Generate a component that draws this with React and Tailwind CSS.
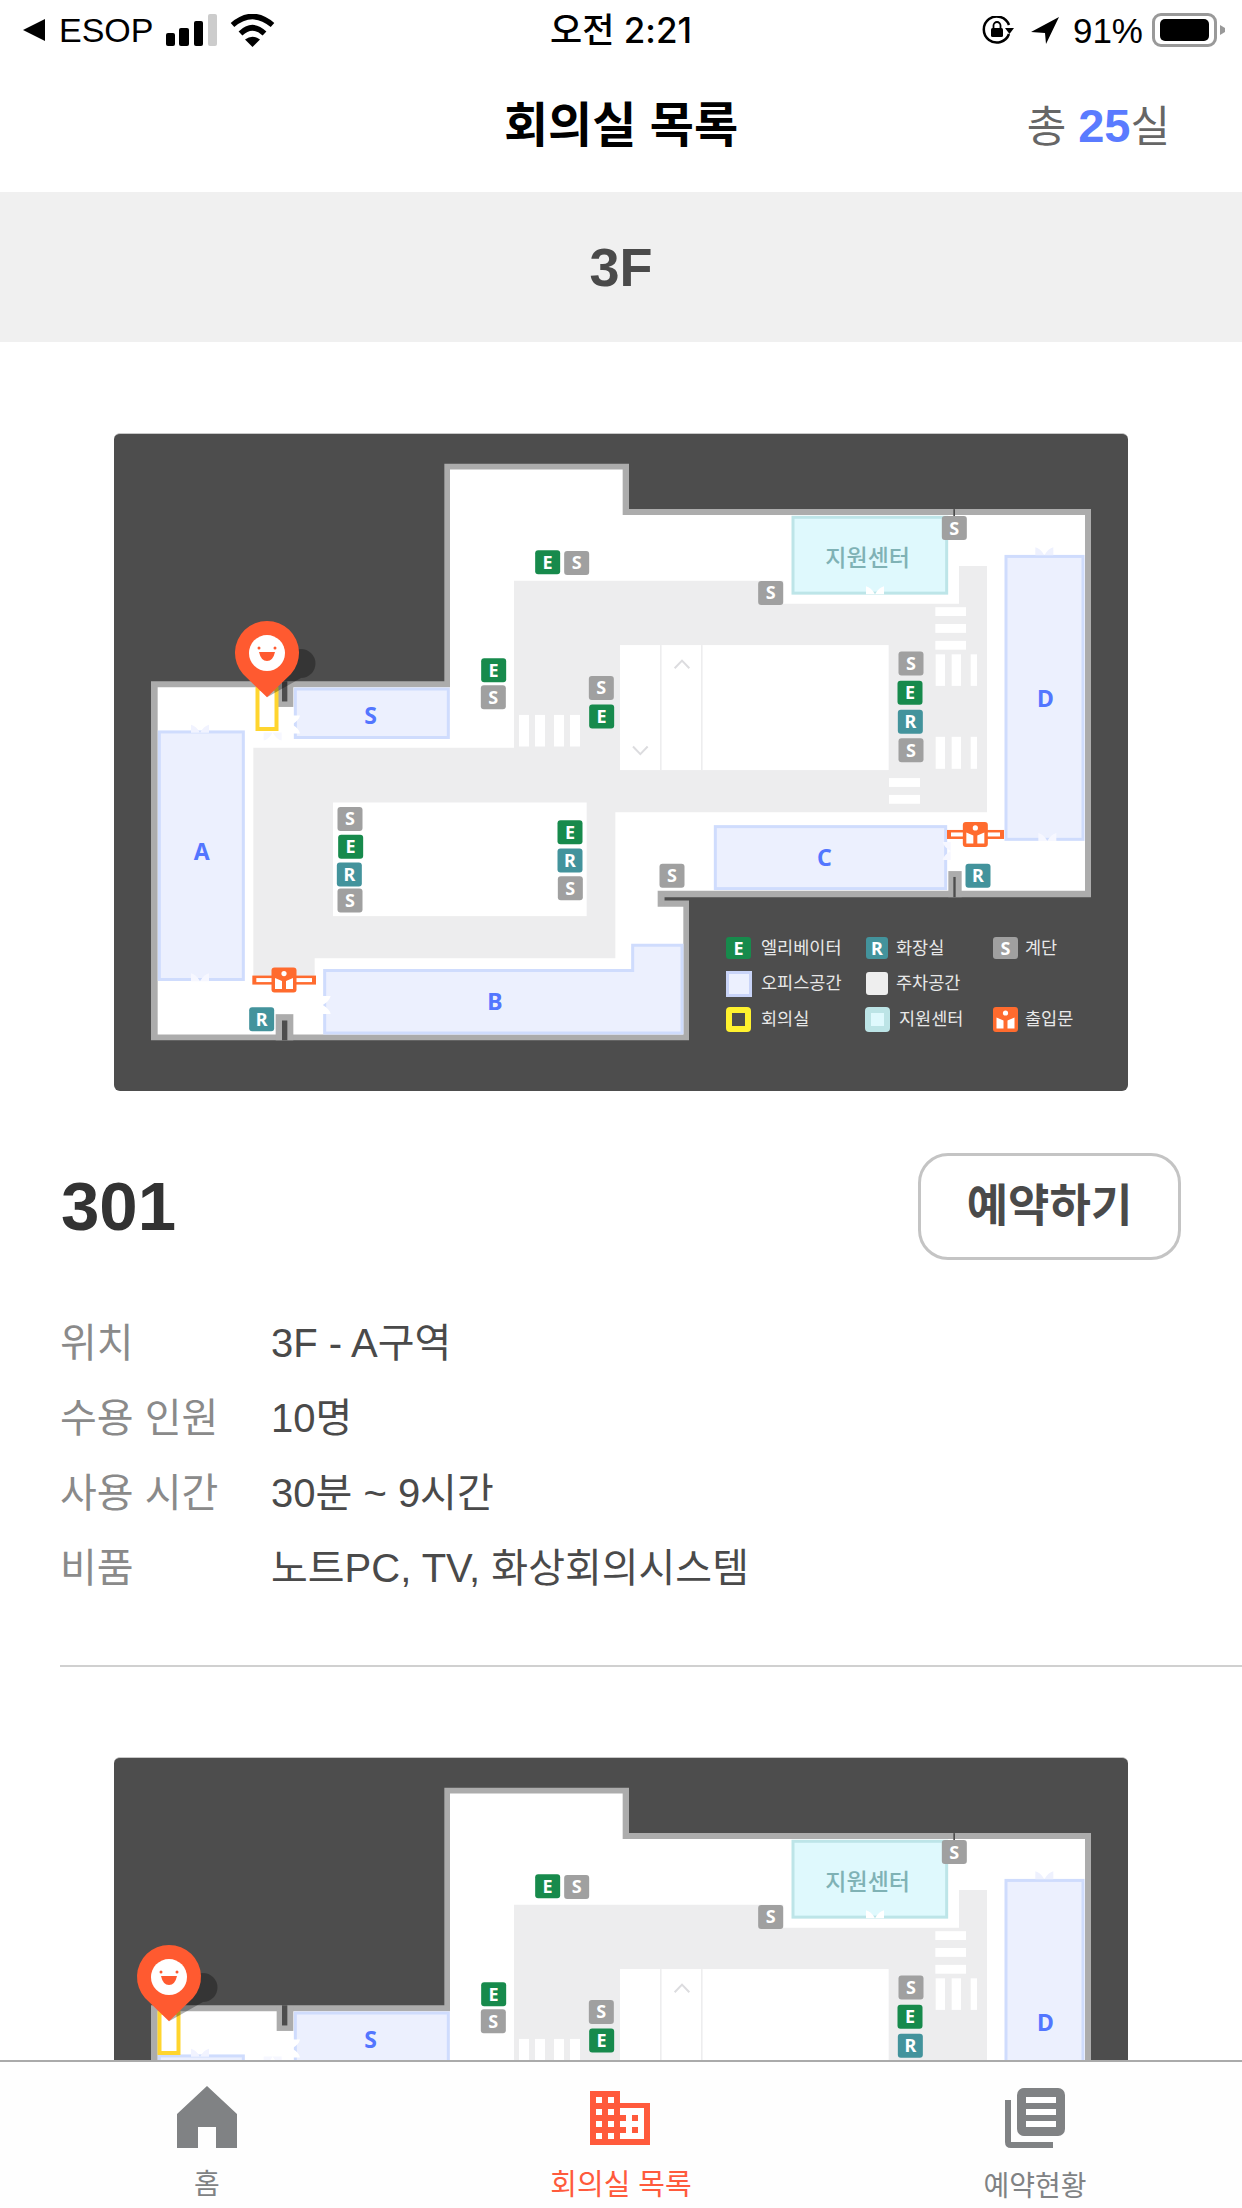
import React from 'react';

// reference crops were read in crop units, so the map numbers stay in those units
const lx = (u) => u / 3 - 4;
const rx = (u) => u / 3 + 506;
const vy = (v) => v / 2.376 - 3;
const pts = (list) => list.map(([x, y]) => `${x},${y}`).join(' ');

const TILE = { E: '#178a4c', S: '#a0a0a0', R: '#43939c' };
const MAP_FONT = "'Noto Sans','Noto Sans CJK KR',sans-serif";

const OUTER = [
  [lx(123), vy(597)], [lx(1003), vy(597)], [lx(1003), vy(80)], [rx(27), vy(80)], [rx(27), vy(188)],
  [rx(1413), vy(188)], [rx(1413), vy(1110)], [rx(133), vy(1110)], [rx(133), vy(1118)], [rx(207), vy(1118)],
  [rx(207), vy(1450)], [lx(123), vy(1450)],
];
const INNER = [
  [lx(143), vy(611)], [lx(1020), vy(611)], [lx(1020), vy(94)], [rx(8), vy(94)], [rx(8), vy(202)],
  [rx(1395), vy(202)], [rx(1395), vy(1095)], [rx(113), vy(1095)], [rx(113), vy(1133)], [rx(190), vy(1133)],
  [rx(190), vy(1436)], [lx(143), vy(1436)],
];
const PARKING = [
  [lx(430), vy(755)], [lx(1212), vy(755)], [lx(1212), vy(358)], [rx(490), vy(358)], [rx(490), vy(413)],
  [rx(1017), vy(413)], [rx(1017), vy(323)], [rx(1101), vy(323)], [rx(1101), vy(908)], [lx(1516), vy(908)],
  [lx(1516), vy(1255)], [lx(614), vy(1255)], [lx(614), vy(1308)], [lx(430), vy(1308)],
];
const ROOM_B = [
  [lx(644), vy(1284)], [rx(38), vy(1284)], [rx(38), vy(1224)], [rx(186), vy(1224)], [rx(186), vy(1433)], [lx(644), vy(1433)],
];

const TILES = [
  ['E', lx(1313), vy(314)], ['S', lx(1400), vy(316)], ['E', lx(1151), vy(571)], ['S', lx(1150), vy(635)],
  ['S', lx(1474), vy(613)], ['E', lx(1475), vy(681)], ['S', lx(720), vy(924)], ['E', lx(722), vy(990)],
  ['R', lx(718), vy(1056)], ['S', lx(720), vy(1118)], ['E', lx(1380), vy(956)], ['R', lx(1380), vy(1023)],
  ['S', lx(1381), vy(1089)], ['R', lx(455), vy(1400)], ['S', rx(1003), vy(233)], ['S', rx(452), vy(387)],
  ['S', rx(873), vy(555)], ['E', rx(870), vy(624)], ['R', rx(871), vy(693)], ['S', rx(873), vy(761)],
  ['S', rx(156), vy(1059)], ['R', rx(1074), vy(1059)],
];

const DOORS = [
  [lx(270), vy(710), 0, '#f1f3ff'], [lx(270), vy(1300), 0, '#f6f7ff'], [lx(558), vy(700), 90, '#ffffff'],
  [lx(488), vy(728), 180, '#f6f7ff'], [lx(650), vy(1366), 90, '#ffffff'], [rx(980), vy(1000), -90, '#f6f7ff'],
  [rx(1273), vy(288), 0, '#eef1fe'], [rx(1282), vy(967), 0, '#f6f7ff'], [rx(765), vy(381), 0, '#ffffff'],
];

const STRIPES = [
  ...[[1227, 1257], [1275, 1305], [1332, 1362], [1380, 1410]].map(([a, b]) => [lx(a), vy(677), lx(b), vy(752)]),
  ...[[947, 975], [995, 1023], [1052, 1071]].flatMap(([a, b]) => [
    [rx(a), vy(533), rx(b), vy(608)],
    [rx(a), vy(729), rx(b), vy(805)],
  ]),
  ...[[421, 442], [461, 482], [501, 522]].map(([a, b]) => [rx(946), vy(a), rx(1038), vy(b)]),
  ...[[827, 848], [867, 888]].map(([a, b]) => [rx(807), vy(a), rx(900), vy(b)]),
];

function Tile({ type, x, y, w = 25, h = 24 }) {
  return (
    <g>
      <rect x={x - w / 2} y={y - h / 2} width={w} height={h} rx={3} fill={TILE[type]} />
      <text x={x} y={y + 6.5} textAnchor="middle" fontSize={18} fontWeight={700} fill="#fff" fontFamily={MAP_FONT}>
        {type}
      </text>
    </g>
  );
}

function EntranceTile({ x, y }) {
  return (
    <g>
      <rect x={x - 12.5} y={y - 12.5} width={25} height={25} rx={3} fill="#ff6b2e" />
      <circle cx={x} cy={y - 6.5} r={2.6} fill="#fff" />
      <path
        d={`M${x - 9} ${y - 2} L${x - 2} ${y + 1} V${y + 9} H${x - 9} Z M${x + 9} ${y - 2} L${x + 2} ${y + 1} V${y + 9} H${x + 9} Z`}
        fill="#fff"
      />
    </g>
  );
}

function Entrance({ x1, x2, tileX, y }) {
  return (
    <g>
      <rect x={x1} y={y - 4.5} width={x2 - x1} height={9} fill="#ff6b2e" />
      <rect x={x1 + 4} y={y - 2} width={x2 - x1 - 8} height={4} fill="#fff" />
      <EntranceTile x={tileX} y={y} />
    </g>
  );
}

function Room({ x1, y1, x2, y2, fill = '#ecf0fe', stroke = '#cfdcfd' }) {
  return <rect x={x1 + 1} y={y1 + 1} width={x2 - x1 - 2} height={y2 - y1 - 2} fill={fill} stroke={stroke} strokeWidth={3} />;
}

function RoomLabel({ x, y, children }) {
  return (
    <text x={x} y={y + 8} textAnchor="middle" fontSize={23} fontWeight={700} fill="#5376ff" fontFamily={MAP_FONT}>
      {children}
    </text>
  );
}

function LegendText({ x, y, children }) {
  return (
    <text x={x} y={y} fontSize={17.5} fill="#e8e8e8" fontFamily={MAP_FONT}>
      {children}
    </text>
  );
}

function Pin({ x }) {
  const top = vy(530);
  const tip = vy(635);
  return (
    <g>
      <path d={`M${x} ${tip} L${x + 25} ${top - 3} L${x + 34} ${top - 4} A14.5 14.5 0 0 1 ${x + 34} ${top + 25} Z`} fill="#000" opacity={0.3} />
      <path d={`M${x} ${tip} L${x - 24} ${top + 21} A32 32 0 1 1 ${x + 24} ${top + 21} Z`} fill="#ff5a30" />
      <circle cx={x} cy={top} r={18} fill="#fff" />
      <circle cx={x - 8} cy={top - 5} r={1.5} fill="#ff5a30" />
      <circle cx={x + 8} cy={top - 5} r={1.5} fill="#ff5a30" />
      <path d={`M${x - 8} ${top - 1} H${x + 8} Q${x + 6} ${top + 8} ${x} ${top + 8} Q${x - 6} ${top + 8} ${x - 8} ${top - 1} Z`} fill="#ff5a30" />
    </g>
  );
}

function FloorMap({ pinX }) {
  return (
    <div className="mx-auto h-[658px] w-[1014px] overflow-hidden rounded-md border-t border-[#c8c8c8] bg-[#4d4d4d]">
      <svg viewBox="0 1 1014 658" width="1014" height="658" className="block">
        <polygon points={pts(OUTER)} fill="#acacac" />
        <rect x={rx(113)} y={vy(1098)} width={rx(133) - rx(113)} height={vy(1133) - vy(1098)} fill="#acacac" />
        <polygon points={pts(INNER)} fill="#fff" />

        {/* wall stubs with the dark slit */}
        <rect x={lx(500)} y={vy(600)} width={50 / 3} height={vy(658) - vy(600)} fill="#acacac" />
        <rect x={lx(516)} y={vy(597)} width={16 / 3} height={vy(645) - vy(597)} fill="#4d4d4d" />
        <rect x={lx(497)} y={vy(1388)} width={53 / 3} height={vy(1450) - vy(1388)} fill="#acacac" />
        <rect x={lx(516)} y={vy(1403)} width={16 / 3} height={vy(1450) - vy(1403)} fill="#4d4d4d" />
        <rect x={rx(985)} y={vy(1048)} width={40 / 3} height={vy(1110) - vy(1048)} fill="#acacac" />
        <rect x={rx(1000)} y={vy(1062)} width={7 / 3} height={vy(1110) - vy(1062)} fill="#4d4d4d" />
        <rect x={rx(1000)} y={vy(188)} width={5 / 3} height={vy(205) - vy(188)} fill="#4d4d4d" />

        <polygon points={pts(PARKING)} fill="#ededee" />
        <rect x={lx(669)} y={vy(885)} width={(1430 - 669) / 3} height={vy(1155) - vy(885)} fill="#fff" />
        <rect x={lx(1530)} y={vy(511)} width={rx(806) - lx(1530)} height={vy(808) - vy(511)} fill="#fff" />
        <rect x={rx(120)} y={vy(511)} width={1.6} height={vy(808) - vy(511)} fill="#ededee" />
        <rect x={rx(243)} y={vy(511)} width={1.6} height={vy(808) - vy(511)} fill="#ededee" />
        <path d={`M${rx(164)} ${vy(566)} L${rx(186)} ${vy(548)} L${rx(208)} ${vy(566)}`} fill="none" stroke="#dcdcdf" strokeWidth={2} />
        <path d={`M${rx(39)} ${vy(752)} L${rx(61)} ${vy(770)} L${rx(83)} ${vy(752)}`} fill="none" stroke="#dcdcdf" strokeWidth={2} />
        {STRIPES.map(([x1, y1, x2, y2], i) => (
          <rect key={i} x={x1} y={y1} width={x2 - x1} height={y2 - y1} fill="#fff" />
        ))}

        <Room x1={lx(145)} y1={vy(715)} x2={lx(403)} y2={vy(1308)} />
        <Room x1={lx(553)} y1={vy(613)} x2={lx(1018)} y2={vy(733)} />
        <Room x1={rx(283)} y1={vy(940)} x2={rx(980)} y2={vy(1092)} />
        <Room x1={rx(1155)} y1={vy(298)} x2={rx(1392)} y2={vy(975)} />
        <polygon points={pts(ROOM_B)} fill="#ecf0fe" stroke="#cfdcfd" strokeWidth={3} />
        <Room x1={rx(516)} y1={vy(205)} x2={rx(983)} y2={vy(390)} fill="#dff9fd" stroke="#bde5e8" />
        <text x={rx(743)} y={vy(322)} textAnchor="middle" fontSize={23} fontWeight={500} fill="#7fb2b5" fontFamily={MAP_FONT}>
          지원센터
        </text>
        <RoomLabel x={lx(782)} y={vy(680)}>S</RoomLabel>
        <RoomLabel x={lx(275)} y={vy(1003)}>A</RoomLabel>
        <RoomLabel x={lx(1155)} y={vy(1358)}>B</RoomLabel>
        <RoomLabel x={rx(613)} y={vy(1018)}>C</RoomLabel>
        <RoomLabel x={rx(1276)} y={vy(638)}>D</RoomLabel>

        {DOORS.map(([x, y, rot, fill], i) => (
          <path key={i} transform={`translate(${x} ${y}) rotate(${rot})`} d="M-9 -4 Q-4 -3 0 4 Q4 -3 9 -4 L9 4 L-9 4 Z" fill={fill} />
        ))}
        {TILES.map(([type, x, y], i) => (
          <Tile key={i} type={type} x={x} y={y} />
        ))}
        <Entrance x1={lx(427)} x2={lx(618)} tileX={lx(522)} y={vy(1307)} />
        <Entrance x1={rx(981)} x2={rx(1152)} tileX={rx(1066)} y={vy(961)} />

        {/* legend */}
        <Tile type="E" x={624.5} y={515} h={22} />
        <Tile type="R" x={763} y={515} w={22} h={22} />
        <Tile type="S" x={891.5} y={515} h={22} />
        <rect x={613.5} y={539.5} width={23} height={23} fill="#ecf0fe" stroke="#c9d4f8" strokeWidth={3} />
        <rect x={752} y={539} width={22} height={23} rx={3} fill="#eeeeee" />
        <rect x={612} y={574} width={25} height={25} rx={4} fill="#fff22e" />
        <rect x={618} y={580} width={13} height={13} fill="#4d4d4d" />
        <rect x={751} y={574} width={25} height={25} rx={4} fill="#bce4e6" />
        <rect x={757} y={580} width={13} height={13} fill="#dff9fd" />
        <EntranceTile x={891.5} y={586.5} />
        <LegendText x={647} y={521}>엘리베이터</LegendText>
        <LegendText x={782} y={521}>화장실</LegendText>
        <LegendText x={911} y={521}>계단</LegendText>
        <LegendText x={647} y={556}>오피스공간</LegendText>
        <LegendText x={782} y={556}>주차공간</LegendText>
        <LegendText x={647} y={592}>회의실</LegendText>
        <LegendText x={785} y={592}>지원센터</LegendText>
        <LegendText x={911} y={592}>출입문</LegendText>

        <rect x={pinX - 9.5} y={vy(611) + 1.5} width={19} height={vy(714) - vy(611) - 3} fill="none" stroke="#ffd52e" strokeWidth={4} />
        <Pin x={pinX} />
      </svg>
    </div>
  );
}

function StatusBar() {
  return (
    <div className="grid h-[60px] grid-cols-3 items-center text-black">
      <div className="flex items-center pl-[23px]">
        <svg width="22" height="22" viewBox="0 0 22 22"><polygon points="0,11 22,0 22,22" fill="#000" /></svg>
        <span className="ml-[14px] text-[34px] leading-none">ESOP</span>
        <svg width="52" height="32" viewBox="0 0 52 32" className="ml-[13px]">
          <rect x="0" y="19" width="9" height="13" rx="2" fill="#000" />
          <rect x="13" y="14" width="10" height="18" rx="2" fill="#000" />
          <rect x="28" y="7" width="9" height="25" rx="2" fill="#000" />
          <rect x="42" y="0" width="9" height="32" rx="2" fill="#ccc" />
        </svg>
        <svg width="45" height="33" viewBox="0 0 45 33" className="ml-[12px]">
          <path d="M2.5 11 Q22.5 -6 42.5 11" fill="none" stroke="#000" strokeWidth="5.5" />
          <path d="M10.5 19.5 Q22.5 8 34.5 19.5" fill="none" stroke="#000" strokeWidth="5.5" />
          <path d="M22.5 33 L15 25.5 Q22.5 20 30 25.5 Z" fill="#000" />
        </svg>
      </div>
      <div className="text-center font-['Inter','Noto_Sans_CJK_KR',sans-serif] text-[35px] font-medium leading-none">오전 2:21</div>
      <div className="flex items-center justify-end pr-[16px]">
        <svg width="32" height="28" viewBox="0 0 32 28">
          <path d="M27 18 A13 13 0 1 1 27 9" fill="none" stroke="#000" strokeWidth="2.5" />
          <polygon points="23,12 32,12 27.5,18" fill="#000" />
          <rect x="9" y="12" width="12" height="9" rx="1.5" fill="#000" />
          <path d="M11.5 12 V9.5 A3.5 3.5 0 0 1 18.500 9.500 V12" fill="none" stroke="#000" strokeWidth="1.8" />
        </svg>
        <svg width="28" height="27" viewBox="0 0 28 27" className="ml-[17px]">
          <polygon points="28,0 0,15 14,16 15,27" fill="#000" />
        </svg>
        <span className="ml-[14px] text-[35px] leading-none">91%</span>
        <div className="ml-[9px] flex h-[34px] w-[65px] items-center justify-center rounded-[9px] border-[3px] border-[#999]">
          <div className="h-[22px] w-[49px] rounded-[5px] bg-black" />
        </div>
        <svg width="7" height="10" viewBox="0 0 7 10" className="ml-[2px]"><polygon points="1,0 6,3 6,7 1,10" fill="#999" /></svg>
      </div>
    </div>
  );
}

function InfoRow({ label, value }) {
  return (
    <div className="flex h-[75px] items-center text-[40px]">
      <div className="w-[211px] text-[#8a8a8a]">{label}</div>
      <div className="text-[#4a4a4a]">{value}</div>
    </div>
  );
}

function BottomNav() {
  return (
    <div className="fixed inset-x-0 bottom-0 grid h-[148px] grid-cols-[414px_414px_1fr] border-t-2 border-[#aaaaaa] bg-[#fefefe] text-[28px]">
      <div className="flex flex-col items-center text-[#808284]">
        <svg width="60" height="62" viewBox="0 0 60 62" className="mt-[24px]">
          <path d="M30 0 L60 28 V62 H39 V41 H21 V62 H0 V28 Z" fill="#808284" />
        </svg>
        <span className="mt-[23px] leading-none">홈</span>
      </div>
      <div className="flex flex-col items-center text-[#ff5a3c]">
        <svg width="60" height="54" viewBox="0 0 60 54" className="mt-[29px] mb-[3px] -translate-x-px">
          <path d="M0 0 H30 V12 H60 V54 H0 Z" fill="#ff5a3c" />
          {[6, 18, 30, 42].map((y) => (
            <g key={y} fill="#fff">
              <rect x="6" y={y} width="6" height="6" />
              <rect x="18" y={y} width="6" height="6" />
            </g>
          ))}
          <rect x="30" y="17" width="24" height="31" fill="#fff" />
          <rect x="42" y="24" width="6" height="6" fill="#ff5a3c" />
          <rect x="42" y="36" width="6" height="6" fill="#ff5a3c" />
          <rect x="30" y="24" width="6" height="6" fill="#ff5a3c" />
          <rect x="30" y="36" width="6" height="6" fill="#ff5a3c" />
        </svg>
        <span className="mt-[23px] text-[29px] leading-none">회의실 목록</span>
      </div>
      <div className="flex flex-col items-center text-[#808284]">
        <svg width="60" height="60" viewBox="0 0 60 60" className="mt-[26px]">
          <path d="M3 12 V54 Q3 57 6 57 H48" fill="none" stroke="#808284" strokeWidth="6" />
          <rect x="12" y="0" width="48" height="48" rx="7" fill="#808284" />
          <rect x="21" y="9" width="30" height="6" fill="#fff" />
          <rect x="21" y="21" width="30" height="6" fill="#fff" />
          <rect x="21" y="33" width="30" height="6" fill="#fff" />
        </svg>
        <span className="mt-[25px] leading-none">예약현황</span>
      </div>
    </div>
  );
}

export default function App() {
  return (
    <div className="relative h-[2208px] overflow-hidden bg-white font-['Liberation_Sans','Noto_Sans_CJK_KR',sans-serif]">
      <StatusBar />
      <div className="grid h-[132px] grid-cols-[1fr_auto_1fr] items-center">
        <div />
        <h1 className="text-[48px] font-bold text-black">회의실 목록</h1>
        <div className="pr-[72px] text-right text-[43px] text-[#666]">
          총 <span className="text-[47px] font-bold text-[#5a7bff]">25</span>실
        </div>
      </div>
      <div className="flex h-[150px] items-center justify-center bg-[#f0f0f0] text-[54px] font-bold text-[#4a4a4a]">3F</div>

      <div className="pt-[91px]">
        <FloorMap pinX={153} />
        <div className="mt-[62px] flex items-center justify-between pl-[61px] pr-[61px]">
          <div className="text-[69px] font-bold leading-none text-[#333]">301</div>
          <button
            type="button"
            className="flex h-[107px] w-[263px] items-center justify-center rounded-[30px] border-[3px] border-[#c4c4c4] text-[45px] font-bold text-[#4a4a4a]"
          >
            예약하기
          </button>
        </div>
        <div className="mt-[45px] pl-[60px]">
          <InfoRow label="위치" value="3F - A구역" />
          <InfoRow label="수용 인원" value="10명" />
          <InfoRow label="사용 시간" value="30분 ~ 9시간" />
          <InfoRow label="비품" value="노트PC, TV, 화상회의시스템" />
        </div>
        <div className="ml-[60px] mt-[60px] h-[2px] bg-[#d0d0d0]" />
      </div>

      <div className="pt-[90px]">
        <FloorMap pinX={55} />
      </div>

      <BottomNav />
    </div>
  );
}
